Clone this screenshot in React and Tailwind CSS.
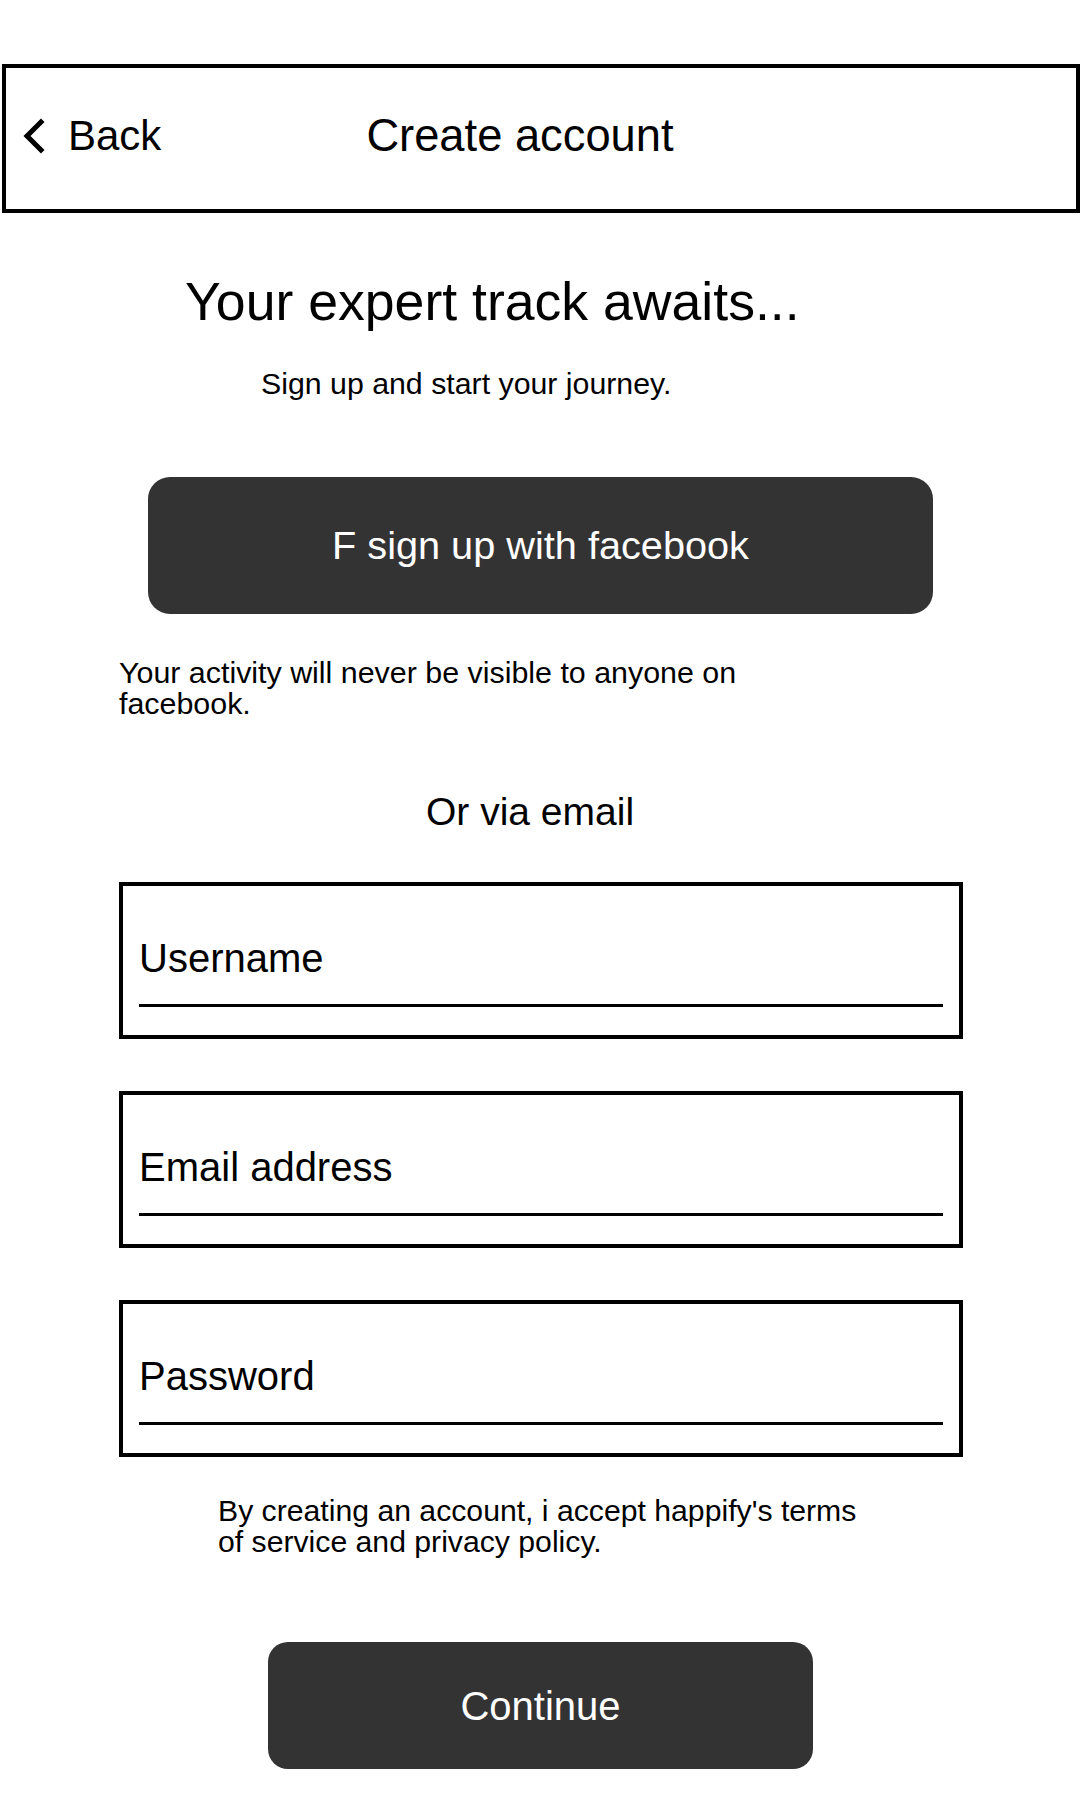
import { useState } from "react";

function BackChevron() {
    return (
        <svg width="24" height="36" viewBox="0 0 24 36" fill="none">
            <path d="M19 4 L5 18 L19 32" stroke="black" strokeWidth="5" strokeLinecap="square" strokeLinejoin="miter" />
        </svg>
    );
}

function Field({ label }) {
    const [value, setValue] = useState("");
    return (
        <label className="block w-[844px] h-[157px] border-4 border-black px-[16px] pt-[52px]">
            <input
                value={value}
                onChange={(e) => setValue(e.target.value)}
                placeholder={label}
                className="block w-full text-[40px] leading-[40px] h-[40px] text-black placeholder:text-black outline-none bg-transparent"
            />
            <div className="h-[3px] bg-black mt-[26px]" />
        </label>
    );
}

export default function App() {
    return (
        <div className="w-[1080px] min-h-[1800px] bg-white text-black font-['Liberation_Sans',Arial,sans-serif]">
            {/* Header */}
            <header className="mt-[64px] ml-[2px] w-[1078px] h-[149px] border-4 border-black flex items-center pb-[6px] pl-[16px]">
                <BackChevron />
                <span className="ml-[22px] text-[42px] leading-[42px]">Back</span>
                <span className="ml-[205px] text-[45.3px] leading-[44px]">Create account</span>
            </header>

            <h1 className="mt-[62px] pl-[185px] text-[53.6px] leading-[53px]">Your expert track awaits...</h1>
            <p className="mt-[41px] pl-[261px] text-[30.3px] leading-[30px]">Sign up and start your journey.</p>

            <button className="mt-[78px] ml-[148px] w-[785px] h-[137px] rounded-[22px] bg-[#333333] text-white text-[39.7px] leading-[39px] flex items-center justify-center">
                F sign up with facebook
            </button>

            <p className="mt-[43px] ml-[119px] w-[660px] text-[30.4px] leading-[31px]">
                Your activity will never be visible to anyone on facebook.
            </p>

            <p className="mt-[74px] pl-[426px] text-[39px] leading-[38px]">Or via email</p>

            <div className="mt-[51px] ml-[119px] flex flex-col gap-[52px]">
                <Field label="Username" />
                <Field label="Email address" />
                <Field label="Password" />
            </div>

            <p className="mt-[38px] ml-[218px] w-[650px] text-[30.2px] leading-[31px]">
                By creating an account, i accept happify's terms of service and privacy policy.
            </p>

            <button className="mt-[85px] ml-[268px] w-[545px] h-[127px] rounded-[20px] bg-[#333333] text-white text-[40px] leading-[40px] flex items-center justify-center">
                Continue
            </button>
        </div>
    );
}
